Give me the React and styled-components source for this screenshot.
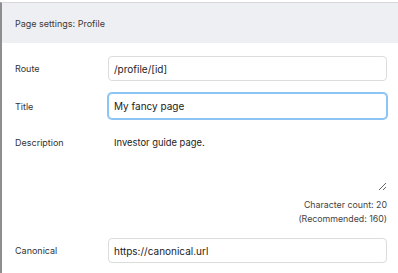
import React from 'react';
import styled, { createGlobalStyle } from 'styled-components';

const GlobalStyle = createGlobalStyle`
  html, body {
    margin: 0;
    padding: 0;
    background: #ffffff;
    font-family: Inter, "Noto Sans", sans-serif;
  }
`;

const Panel = styled.div`
  margin-top: 2px;
  width: 396px;
  height: 271px;
  border-left: 2px solid #8e8e8e;
  border-top: 1px solid #d6d7da;
  background: #ffffff;
  overflow: hidden;
`;

const Header = styled.div`
  height: 40px;
  display: flex;
  align-items: center;
  padding-left: 13px;
  background: #eeeff2;
  color: #3a3a3a;
  font-size: 9px;
`;

const Form = styled.div`
  display: flex;
  flex-direction: column;
  gap: 12px;
  padding: 13px 11px 0 13px;
`;

const Row = styled.div`
  display: grid;
  grid-template-columns: 93px 1fr;
  align-items: ${props => (props.top ? 'start' : 'center')};
`;

const Label = styled.label`
  font-size: 9px;
  color: #333333;
  padding-top: ${props => (props.top ? '6px' : '0')};
`;

const Input = styled.input`
  box-sizing: border-box;
  width: 100%;
  height: ${props => (props.focused ? '26px' : '25px')};
  margin: 0;
  padding: 0 5px;
  border: 1px solid ${props => (props.focused ? '#8cc4f6' : '#dcdcdc')};
  box-shadow: ${props => (props.focused ? '0 0 0 1px #8cc4f6' : 'none')};
  border-radius: 4px;
  font-family: Inter, "Noto Sans", sans-serif;
  font-size: 10px;
  color: #222222;
  outline: none;
  background: #ffffff;
`;

const Field = styled.div`
  display: flex;
  flex-direction: column;
`;

const TextArea = styled.textarea`
  box-sizing: border-box;
  width: 100%;
  height: 60px;
  margin: 0;
  padding: 5px 6px;
  border: none;
  outline: none;
  resize: vertical;
  font-family: Inter, "Noto Sans", sans-serif;
  font-size: 9.4px;
  line-height: 14px;
  color: #222222;
  background: transparent;
`;

const Counter = styled.div`
  text-align: right;
  font-size: 8.8px;
  line-height: 14px;
  color: #444444;
  padding-top: 7px;
`;

export default function App() {
  return (
    <>
      <GlobalStyle />
      <Panel>
        <Header>Page settings: Profile</Header>
        <Form>
          <Row>
            <Label>Route</Label>
            <Input defaultValue="/profile/[id]" />
          </Row>
          <Row>
            <Label>Title</Label>
            <Input focused defaultValue="My fancy page" />
          </Row>
          <Row top>
            <Label top>Description</Label>
            <Field>
              <TextArea defaultValue="Investor guide page." />
              <Counter>
                Character count: 20
                <br />
                (Recommended: 160)
              </Counter>
            </Field>
          </Row>
          <Row>
            <Label>Canonical</Label>
            <Input defaultValue="https://canonical.url" />
          </Row>
        </Form>
      </Panel>
    </>
  );
}
